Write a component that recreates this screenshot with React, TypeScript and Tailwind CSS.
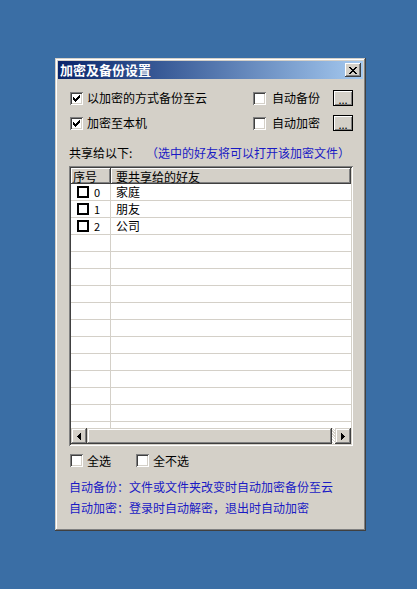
import React from 'react';

const FONT = "font-['Noto_Sans_CJK_SC','Noto_Sans',sans-serif]";

// classic sunken checkbox
const Check = ({ checked }: { checked?: boolean }) => (
  <span className="relative inline-block w-[13px] h-[13px] shrink-0 bg-white shadow-[inset_1px_1px_#808080,inset_-1px_-1px_#ffffff,inset_2px_2px_#404040,inset_-2px_-2px_#d4d0c8]">
    {checked && (
      <svg width="13" height="13" viewBox="0 0 13 13" className="absolute left-0 top-0" shapeRendering="crispEdges">
        <path d="M3 5h1v3h-1z M4 6h1v3h-1z M5 7h1v3h-1z M6 6h1v3h-1z M7 5h1v3h-1z M8 4h1v3h-1z M9 3h1v3h-1z" fill="#000" />
      </svg>
    )}
  </span>
);

const DotsButton = () => (
  <button className="w-[20px] h-[16px] bg-[#d4d0c8] border border-black shadow-[inset_1px_1px_#ffffff,inset_-1px_-1px_#808080] flex items-end justify-center pb-[2px] text-[11px] leading-[8px] text-black">
    ...
  </button>
);

const raised = 'bg-[#d4d0c8] shadow-[inset_-1px_-1px_#404040,inset_1px_1px_#ffffff,inset_-2px_-2px_#808080]';
const scrollBtn = 'bg-[#d4d0c8] shadow-[inset_-1px_-1px_#404040,inset_1px_1px_#d4d0c8,inset_-2px_-2px_#808080,inset_2px_2px_#ffffff]';

const friends = ['家庭', '朋友', '公司'];

export default function App() {
  return (
    <div className={`w-[417px] h-[589px] bg-[#3a6ea5] pt-[58px] pl-[55px] ${FONT}`}>
      <div className="w-[311px] h-[473px] bg-[#d4d0c8] p-[3px] flex flex-col shadow-[inset_-1px_-1px_#404040,inset_1px_1px_#d4d0c8,inset_-2px_-2px_#808080,inset_2px_2px_#ffffff]">
        {/* title bar */}
        <div className="h-[18px] flex items-center justify-between pl-[2px] pr-[2px] bg-gradient-to-r from-[#0a246a] to-[#a6caf0]">
          <span className="text-white font-bold text-[13px] leading-[16px]">加密及备份设置</span>
          <button className={`w-[16px] h-[14px] flex items-center justify-center ${raised}`}>
            <svg width="8" height="7" viewBox="0 0 8 7" shapeRendering="crispEdges">
              <path d="M0 0h2v1h-2z M1 1h2v1h-2z M2 2h4v1h-4z M3 3h2v1h-2z M2 4h4v1h-4z M1 5h2v1h-2z M0 6h2v1h-2z M6 0h2v1h-2z M5 1h2v1h-2z M5 5h2v1h-2z M6 6h2v1h-2z" fill="#000" />
            </svg>
          </button>
        </div>

        {/* options */}
        <div className="flex flex-col gap-[9px] mt-[11px] pl-[12px] pr-[10px] text-[12px] leading-[14px] text-black">
          <div className="flex items-center h-[16px]">
            <div className="flex items-center gap-[4px] w-[183px]">
              <Check checked />
              <span>以加密的方式备份至云</span>
            </div>
            <Check />
            <span className="ml-[6px]">自动备份</span>
            <div className="ml-auto">
              <DotsButton />
            </div>
          </div>
          <div className="flex items-center h-[16px]">
            <div className="flex items-center gap-[4px] w-[183px]">
              <Check checked />
              <span>加密至本机</span>
            </div>
            <Check />
            <span className="ml-[6px]">自动加密</span>
            <div className="ml-auto">
              <DotsButton />
            </div>
          </div>
        </div>

        <div className="mt-[15px] pl-[11px] text-[12px] leading-[14px] flex">
          <span className="text-black w-[77px]">共享给以下:</span>
          <span className="text-[#1a1ac4]">（选中的好友将可以打开该加密文件）</span>
        </div>

        {/* list view */}
        <div className="ml-[11px] mt-[6px] w-[284px] h-[280px] p-[2px] flex flex-col bg-white shadow-[inset_1px_1px_#808080,inset_-1px_-1px_#ffffff,inset_2px_2px_#404040,inset_-2px_-2px_#d4d0c8]">
          <div className="flex-1 overflow-hidden flex flex-col text-[12px] leading-[14px] text-black">
            <div className="flex h-[16px] shrink-0">
              <div className={`w-[40px] pl-[2px] flex items-center ${raised}`}>
                <span className="leading-[13px]">序号</span>
              </div>
              <div className={`flex-1 pl-[5px] flex items-center ${raised}`}>
                <span className="leading-[13px]">要共享给的好友</span>
              </div>
            </div>
            <div className="flex-1 overflow-hidden">
              {Array.from({ length: 16 }).map((_, i) => (
                <div key={i} className="flex h-[17px] border-b border-[#d4d0c8]">
                  <div className="w-[40px] border-r border-[#d4d0c8] flex items-center pl-[6px] gap-[5px]">
                    {i < friends.length && (
                      <>
                        <span className="w-[12px] h-[12px] border-2 border-black bg-white" />
                        <span className="text-[11px] leading-[12px]">{i}</span>
                      </>
                    )}
                  </div>
                  <div className="flex-1 flex items-center pl-[5px]">{friends[i] ?? ''}</div>
                </div>
              ))}
            </div>
          </div>
          {/* horizontal scrollbar */}
          <div className="h-[16px] shrink-0 flex bg-[#d4d0c8]">
            <div className={`w-[16px] h-[16px] flex items-center justify-center ${scrollBtn}`}>
              <svg width="4" height="7" viewBox="0 0 4 7" shapeRendering="crispEdges">
                <path d="M0 3h1v1h-1z M1 2h1v3h-1z M2 1h1v5h-1z M3 0h1v7h-1z" fill="#000" />
              </svg>
            </div>
            <div className={`flex-1 ${scrollBtn}`} />
            <div className="w-[3px] bg-[repeating-linear-gradient(45deg,#ffffff_0px,#ffffff_1px,#d4d0c8_1px,#d4d0c8_2px)]" />
            <div className={`w-[16px] h-[16px] flex items-center justify-center ${scrollBtn}`}>
              <svg width="4" height="7" viewBox="0 0 4 7" shapeRendering="crispEdges">
                <path d="M0 0h1v7h-1z M1 1h1v5h-1z M2 2h1v3h-1z M3 3h1v1h-1z" fill="#000" />
              </svg>
            </div>
          </div>
        </div>

        {/* select all */}
        <div className="mt-[8px] pl-[12px] flex items-center h-[13px] text-[12px] leading-[14px] text-black">
          <div className="flex items-center gap-[4px] w-[66px]">
            <Check />
            <span>全选</span>
          </div>
          <div className="flex items-center gap-[4px]">
            <Check />
            <span>全不选</span>
          </div>
        </div>

        <div className="mt-[13px] pl-[11px] flex flex-col gap-[7px] text-[12px] leading-[14px] text-[#1a1ac4]">
          <span>自动备份：文件或文件夹改变时自动加密备份至云</span>
          <span>自动加密：登录时自动解密，退出时自动加密</span>
        </div>
      </div>
    </div>
  );
}
